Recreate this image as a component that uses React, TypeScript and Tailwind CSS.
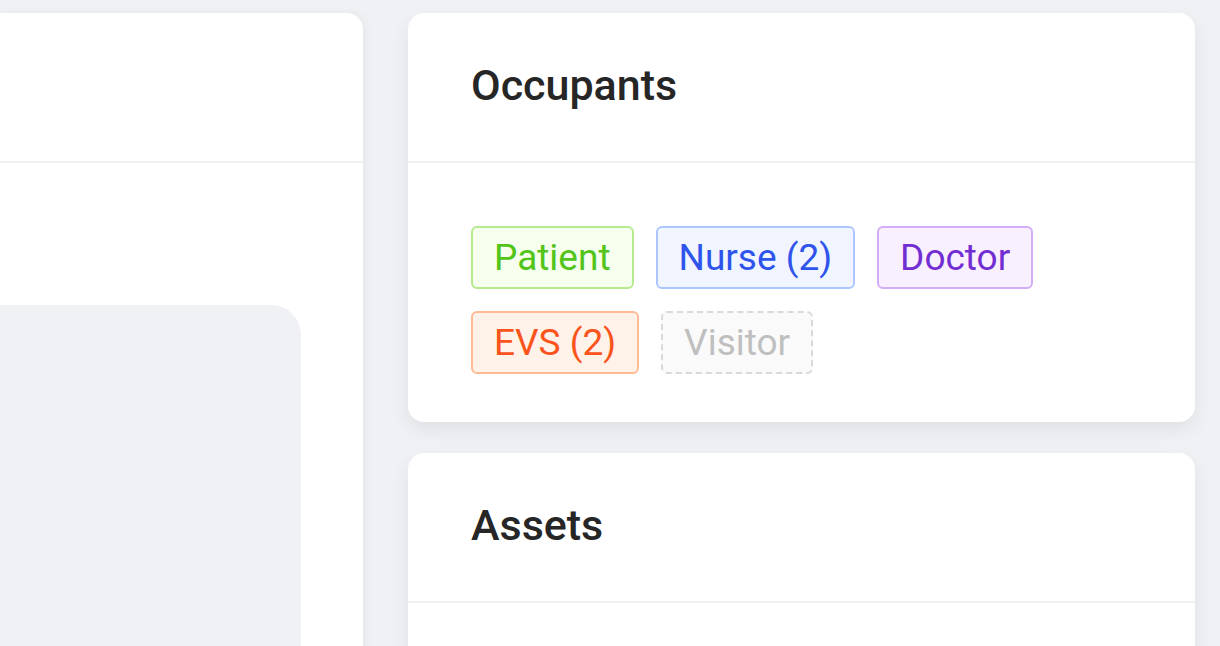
import React from 'react';

interface Occupant {
  label: string;
  tone: 'green' | 'blue' | 'purple' | 'orange' | 'empty';
}

const occupants: Occupant[] = [
  { label: 'Patient', tone: 'green' },
  { label: 'Nurse (2)', tone: 'blue' },
  { label: 'Doctor', tone: 'purple' },
  { label: 'EVS (2)', tone: 'orange' },
  { label: 'Visitor', tone: 'empty' },
];

const toneClass: Record<Occupant['tone'], string> = {
  green: 'border-solid border-[#b7eb8f] bg-[#f6ffed] text-[#52c41a]',
  blue: 'border-solid border-[#adc6ff] bg-[#f0f5ff] text-[#2f54eb]',
  purple: 'border-solid border-[#d3adf7] bg-[#f9f0ff] text-[#722ed1]',
  orange: 'border-solid border-[#ffbb96] bg-[#fff2e8] text-[#fa541c]',
  empty: 'border-dashed border-[#d9d9d9] bg-[#fafafa] text-[#bfbfbf]',
};

function Tag({ item }: { item: Occupant }) {
  return (
    <span
      className={`flex h-[63px] items-center rounded-[6px] border-2 px-[21px] text-[37px] leading-none ${toneClass[item.tone]}`}
    >
      {item.label}
    </span>
  );
}

function CardHeader({ title }: { title: string }) {
  return (
    <div className="flex h-[150px] items-center border-b-2 border-[#eff0f2] px-[63px] pb-[4px]">
      <h2 className="text-[43px] font-medium text-[#262626]">{title}</h2>
    </div>
  );
}

export default function App() {
  return (
    <div
      className="flex h-[646px] w-[1220px] gap-[45px] overflow-hidden bg-[#f0f1f4] pt-[13px]"
      style={{ fontFamily: 'Roboto, "Liberation Sans", sans-serif' }}
    >
      {/* Left panel */}
      <div className="flex h-[700px] w-[363px] shrink-0 flex-col rounded-tr-[16px] bg-white shadow-[2px_0_8px_rgba(0,0,0,0.05)]">
        <div className="h-[150px] border-b-2 border-[#eff0f2]" />
        <div className="pt-[142px]">
          <div className="h-[400px] w-[301px] rounded-tr-[30px] bg-[#f0f1f4]" />
        </div>
      </div>

      {/* Right column */}
      <div className="flex w-[787px] shrink-0 flex-col gap-[31px]">
        <div className="rounded-[16px] bg-white shadow-[0_8px_20px_rgba(0,0,0,0.07)]">
          <CardHeader title="Occupants" />
          <div className="flex flex-wrap gap-[22px] px-[63px] pb-[48px] pt-[63px] pr-[120px]">
            {occupants.map((o) => (
              <Tag key={o.label} item={o} />
            ))}
          </div>
        </div>

        <div className="h-[400px] shrink-0 rounded-[16px] bg-white shadow-[0_8px_20px_rgba(0,0,0,0.07)]">
          <CardHeader title="Assets" />
        </div>
      </div>
    </div>
  );
}
